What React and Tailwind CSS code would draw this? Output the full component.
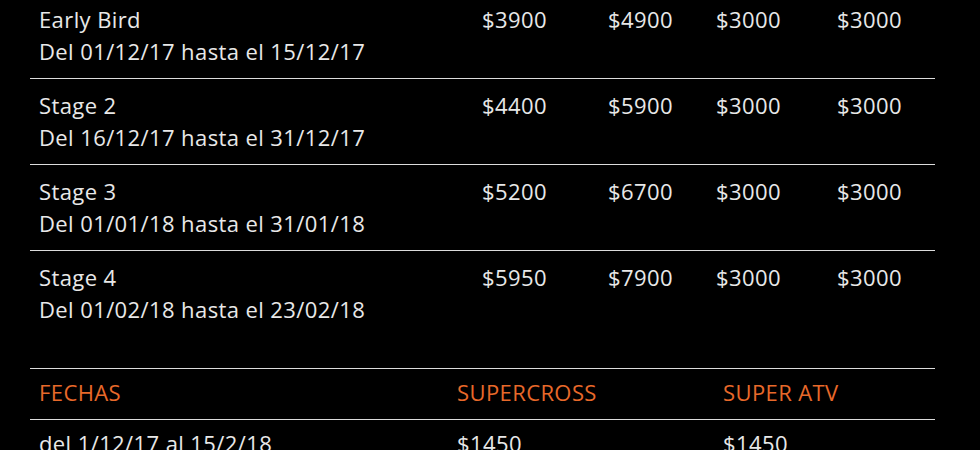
import React from "react";

const rows = [
  ["Early Bird", "Del 01/12/17 hasta el 15/12/17", "$3900", "$4900", "$3000", "$3000"],
  ["Stage 2", "Del 16/12/17 hasta el 31/12/17", "$4400", "$5900", "$3000", "$3000"],
  ["Stage 3", "Del 01/01/18 hasta el 31/01/18", "$5200", "$6700", "$3000", "$3000"],
  ["Stage 4", "Del 01/02/18 hasta el 23/02/18", "$5950", "$7900", "$3000", "$3000"],
];

export default function App() {
  return (
    <div
      className="w-[980px] h-[450px] bg-black overflow-hidden text-[22px] leading-[32px] tracking-[0.4px] text-[#e8e8e8]"
      style={{ fontFamily: '"Open Sans", sans-serif' }}
    >
      <div className="mx-[30px] w-[905px] -mt-[7px]">
        <div>
          {rows.map((r, i) => (
            <div
              key={i}
              className={`grid grid-cols-[444px_126px_108px_121px_1fr] ${i > 0 ? "border-t border-[#dcdcdc]" : ""}`}
            >
              <div className="px-[9px] pt-[10px] pb-[11px]">
                <div>{r[0]}</div>
                <div>{r[1]}</div>
              </div>
              <div className="px-[8px] pt-[10px]">{r[2]}</div>
              <div className="px-[8px] pt-[10px]">{r[3]}</div>
              <div className="px-[8px] pt-[10px]">{r[4]}</div>
              <div className="px-[8px] pt-[10px]">{r[5]}</div>
            </div>
          ))}
        </div>
        <div className="mt-[32px] border-t border-[#dcdcdc]">
          <div className="grid grid-cols-[419px_266px_1fr] text-[#e8692a] border-b border-[#dcdcdc]">
            <div className="px-[9px] pt-[7px] pb-[11px]">FECHAS</div>
            <div className="px-[8px] pt-[7px] pb-[11px]">SUPERCROSS</div>
            <div className="px-[8px] pt-[7px] pb-[11px]">SUPER ATV</div>
          </div>
          <div className="grid grid-cols-[419px_266px_1fr]">
            <div className="px-[9px] pt-[7px] pb-[11px]">del 1/12/17 al 15/2/18</div>
            <div className="px-[8px] pt-[7px] pb-[11px]">$1450</div>
            <div className="px-[8px] pt-[7px] pb-[11px]">$1450</div>
          </div>
        </div>
      </div>
    </div>
  );
}
